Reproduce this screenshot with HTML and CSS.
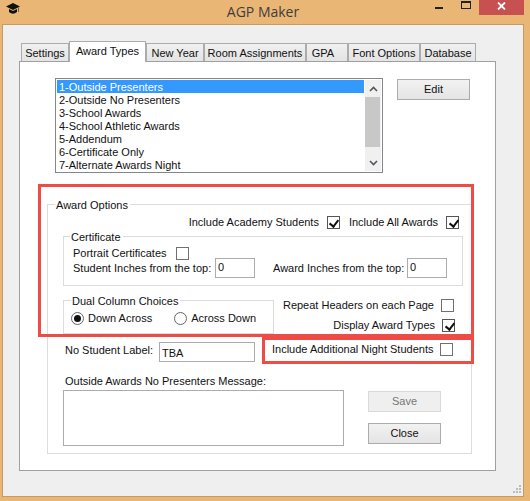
FILE: index.html
```html
<!DOCTYPE html>
<html lang="en">
<head>
    <meta charset="UTF-8">
    <title>AGP Maker</title>
    <link rel="stylesheet" href="styles.css">
</head>
<body>
    <div class="titlebar">
        <svg class="app-icon" width="14" height="12" viewBox="0 0 14 12">
            <path d="M7 0 L14 3.5 L7 7 L0 3.5 Z" fill="#111"/>
            <path d="M3 6 L7 8 L11 6 V9 Q7 12.5 3 9 Z" fill="#111"/>
            <path d="M12.5 4.5 V9" stroke="#8a5a20" stroke-width="1"/>
        </svg>
        <div class="title">AGP Maker</div>
        <div class="win-btn min"></div>
        <div class="win-btn max"></div>
        <div class="win-btn close">
            <svg width="9" height="8" viewBox="0 0 9 8"><path d="M1 0.5 L8 7.5 M8 0.5 L1 7.5" stroke="#fff" stroke-width="1.8"/></svg>
        </div>
    </div>

    <div class="client">
        <div class="tabs">
            <div class="tab t1">Settings</div>
            <div class="tab active t2">Award Types</div>
            <div class="tab t3">New Year</div>
            <div class="tab t4">Room Assignments</div>
            <div class="tab t5">GPA</div>
            <div class="tab t6">Font Options</div>
            <div class="tab t7">Database</div>
        </div>

        <div class="panel">
            <div class="top-row">
                <div class="listbox">
                    <div class="items">
                        <div class="item selected">1-Outside Presenters</div>
                        <div class="item">2-Outside No Presenters</div>
                        <div class="item">3-School Awards</div>
                        <div class="item">4-School Athletic Awards</div>
                        <div class="item">5-Addendum</div>
                        <div class="item">6-Certificate Only</div>
                        <div class="item">7-Alternate Awards Night</div>
                    </div>
                    <div class="scrollbar">
                        <svg width="9" height="6" viewBox="0 0 9 6"><path d="M1 5 L4.5 1.5 L8 5" fill="none" stroke="#555" stroke-width="1.6"/></svg>
                        <div class="thumb"></div>
                        <svg width="9" height="6" viewBox="0 0 9 6"><path d="M1 1 L4.5 4.5 L8 1" fill="none" stroke="#555" stroke-width="1.6"/></svg>
                    </div>
                </div>
                <div class="btn edit">Edit</div>
            </div>

            <div class="options">
                <div class="legend">Award Options</div>
                <div class="row includes">
                    <span>Include Academy Students</span><span class="check on"></span>
                    <span class="gap-l">Include All Awards</span><span class="check on"></span>
                </div>

                <div class="group cert">
                    <div class="legend cert-legend">Certificate</div>
                    <div class="row portrait">
                        <span>Portrait Certificates</span><span class="check dark"></span>
                    </div>
                    <div class="row inches">
                        <span class="student-inches">Student Inches from the top:</span><span class="field small">0</span>
                        <span class="award-inches">Award Inches from the top:</span><span class="field small">0</span>
                    </div>
                </div>

                <div class="split">
                    <div class="group dual">
                        <div class="legend">Dual Column Choices</div>
                        <div class="row radios">
                            <span class="radio on"></span><span>Down Across</span>
                            <span class="radio second"></span><span>Across Down</span>
                        </div>
                    </div>
                    <div class="right-checks">
                        <div class="row repeat"><span>Repeat Headers on each Page</span><span class="check dark"></span></div>
                        <div class="row"><span>Display Award Types</span><span class="check on"></span></div>
                    </div>
                </div>

                <div class="row student-row">
                    <span class="no-label">No Student Label:</span><span class="field tba">TBA</span>
                    <span class="night">Include Additional Night Students</span><span class="check dark"></span>
                </div>

                <div class="msg-label">Outside Awards No Presenters Message:</div>
                <div class="bottom-row">
                    <div class="field message"></div>
                    <div class="buttons">
                        <div class="btn disabled">Save</div>
                        <div class="btn">Close</div>
                    </div>
                </div>
            </div>
        </div>

        <div class="grip"></div>
    </div>

    <div class="mark mark-options"></div>
    <div class="mark mark-night"></div>
</body>
</html>
```

FILE: styles.css
```css
* {
    box-sizing: border-box;
}

body {
    margin: 0;
    width: 530px;
    height: 501px;
    overflow: hidden;
    position: relative;
    background: #eab676;
    color: #111;
    font-family: "Liberation Sans", Arial, sans-serif;
    font-size: 11px;
    line-height: 13px;
    white-space: nowrap;
}

/* title bar */
.titlebar {
    height: 24px;
    display: flex;
    position: relative;
}

.app-icon {
    position: absolute;
    left: 6px;
    top: 3px;
}

.title {
    flex: 1;
    padding: 2px 0 0 91px;
    text-align: center;
    font-family: "Open Sans", sans-serif;
    font-size: 14px;
    line-height: 20px;
    color: #3d3d3d;
}

.win-btn.min {
    width: 8px;
    height: 2px;
    margin: 7px 18px 0 0;
    background: #222;
}

.win-btn.max {
    width: 10px;
    height: 8px;
    margin: 1px 8px 0 0;
    border: 1px solid #222;
    border-top-width: 2px;
}

.win-btn.close {
    width: 45px;
    height: 15px;
    margin-right: 6px;
    background: #c75050;
    padding-top: 2px;
    display: flex;
    justify-content: center;
}

/* window client area */
.client {
    position: relative;
    width: 520px;
    height: 471px;
    margin: 1px 0 0 3px;
    background: #efefef;
    outline: 1px solid #c89a5f;
    padding: 16px 0 0 16px;
}

.tabs {
    display: flex;
    height: 20px;
    align-items: flex-end;
    padding-left: 2px;
}

.tab {
    height: 18px;
    padding-top: 3px;
    text-align: center;
    background: linear-gradient(#f0f0f0, #e4e4e4);
    border: 1px solid #acacac;
    border-bottom: 0;
}

.tab.active {
    height: 21px;
    background: #fff;
    padding-top: 3px;
    position: relative;
    top: 1px;
    z-index: 1;
}

.t1 { width: 48px; }
.t2 { width: 77px; }
.t3 { width: 58px; }
.t4 { width: 102px; }
.t5 { width: 42px; padding-right: 8px; }
.t6 { width: 72px; }
.t7 { width: 56px; }

.panel {
    width: 477px;
    height: 410px;
    background: #fff;
    border: 1px solid #a0a0a0;
    padding: 16px 0 0 35px;
}

.top-row {
    display: flex;
    align-items: flex-start;
}

.listbox {
    width: 328px;
    height: 95px;
    border: 1px solid #82878c;
    padding: 1px;
    display: flex;
    justify-content: space-between;
}

.item {
    height: 13px;
    width: 307px;
    padding: 1px 0 0 2px;
}

.item.selected {
    background: #3399ff;
    color: #fff;
}

.scrollbar {
    width: 16px;
    background: #f0f0f0;
    display: flex;
    flex-direction: column;
    align-items: center;
    padding-top: 6px;
}

.thumb {
    width: 15px;
    height: 50px;
    margin: 5px 1px 13px 0;
    background: #c8c8c8;
}

.btn {
    width: 73px;
    height: 21px;
    line-height: 19px;
    text-align: center;
    background: linear-gradient(#f2f2f2, #e4e4e4);
    border: 1px solid #acacac;
}

.btn.edit {
    margin: 1px 0 0 14px;
}

.btn.disabled {
    background: #efefef;
    border-color: #d9d9d9;
    color: #777;
}

/* group boxes */
.options {
    position: relative;
    width: 425px;
    height: 250px;
    margin: 31px 0 0 -8px;
    border: 1px solid #dcdcdc;
    padding: 0 0 0 15px;
}

.group {
    position: relative;
    border: 1px solid #dcdcdc;
}

.legend {
    position: absolute;
    top: -6px;
    left: 7px;
    padding: 0 2px 0 1px;
    background: #fff;
}

.cert-legend {
    left: 6px;
}

.row {
    display: flex;
    align-items: center;
}

.check {
    width: 13px;
    height: 13px;
    margin-left: 7px;
    border: 1px solid #555;
    background: #fff;
    position: relative;
}

.check.dark {
    border-color: #707070;
}

.check.on::after {
    content: "";
    position: absolute;
    left: 3.5px;
    top: 1px;
    width: 4px;
    height: 7px;
    border: solid #111;
    border-width: 0 2px 2px 0;
    transform: rotate(38deg);
}

.includes {
    height: 13px;
    margin-top: 11px;
    padding-right: 12px;
    justify-content: flex-end;
}

.includes .check {
    margin-left: 8px;
}

.gap-l {
    margin-left: 9px;
}

.cert {
    width: 400px;
    height: 50px;
    margin-top: 7px;
}

.portrait {
    padding: 10px 0 0 9px;
}

.portrait .check {
    margin-left: 9px;
}

.inches {
    margin-top: -2px;
    padding-left: 9px;
}

.student-inches {
    width: 142px;
    padding-top: 1px;
}

.field {
    display: block;
    border: 1px solid #acacac;
    background: #fff;
    padding-left: 2px;
}

.field.small {
    width: 40px;
    height: 20px;
    line-height: 17px;
}

.award-inches {
    width: 134px;
    margin-left: 18px;
    padding-top: 1px;
}

.split {
    display: flex;
    margin-top: 14px;
    height: 34px;
}

.dual {
    width: 211px;
    height: 34px;
}

.radios {
    padding: 11px 0 0 7px;
}

.radio {
    width: 13px;
    height: 13px;
    border-radius: 50%;
    border: 1px solid #666;
    background: #fff;
    margin-right: 4px;
    display: flex;
    align-items: center;
    justify-content: center;
}

.radio.on::after {
    content: "";
    width: 7px;
    height: 7px;
    border-radius: 50%;
    background: #111;
}

.radio.second {
    margin-left: 22px;
}

.right-checks {
    flex: 1;
    margin-top: -1px;
    padding-right: 16px;
    display: flex;
    flex-direction: column;
    align-items: flex-end;
    gap: 7px;
}

.repeat {
    margin-right: 1px;
}

.student-row {
    margin-top: 8px;
    height: 20px;
    padding-left: 2px;
    align-items: flex-start;
}

.no-label {
    width: 94px;
    margin-top: 2px;
}

.field.tba {
    width: 96px;
    height: 20px;
    line-height: 20px;
}

.night {
    margin: 1px 0 0 17px;
}

.student-row .check {
    margin-top: 1px;
}

.msg-label {
    margin: 13px 0 0 2px;
}

.bottom-row {
    display: flex;
    margin-top: 2px;
}

.field.message {
    width: 281px;
    height: 56px;
}

.buttons {
    display: flex;
    flex-direction: column;
    gap: 11px;
    margin: 1px 0 0 24px;
}

/* resize grip */
.grip {
    position: absolute;
    left: 516px;
    top: 460px;
    width: 2px;
    height: 2px;
    background: #bbb;
    box-shadow: -3px 3px #bbb, 0 3px #bbb, -6px 6px #bbb, -3px 6px #bbb, 0 6px #bbb;
}

/* red marks drawn over the shot */
.mark {
    position: absolute;
    border: 3px solid #ee4c46;
}

.mark-options {
    left: 38px;
    top: 184px;
    width: 436px;
    height: 153px;
}

.mark-night {
    left: 262px;
    top: 337px;
    width: 212px;
    height: 27px;
}
```
